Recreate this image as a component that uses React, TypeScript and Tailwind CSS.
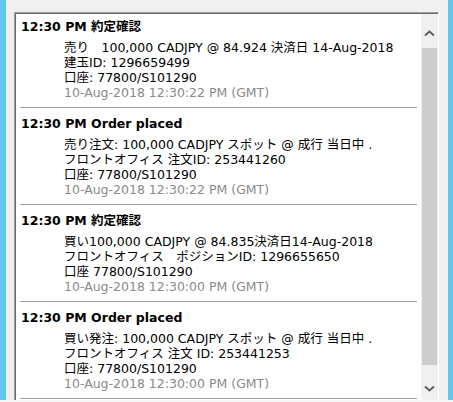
type Entry = {
  title: string;
  lines: string[];
  stamp: string;
};

const entries: Entry[] = [
  {
    title: '12:30 PM 約定確認',
    lines: ['売り　100,000 CADJPY @ 84.924 決済日 14-Aug-2018', '建玉ID: 1296659499', '口座: 77800/S101290'],
    stamp: '10-Aug-2018 12:30:22 PM (GMT)',
  },
  {
    title: '12:30 PM Order placed',
    lines: ['売り注文: 100,000 CADJPY スポット @ 成行 当日中 .', 'フロントオフィス 注文ID: 253441260', '口座: 77800/S101290'],
    stamp: '10-Aug-2018 12:30:22 PM (GMT)',
  },
  {
    title: '12:30 PM 約定確認',
    lines: ['買い100,000 CADJPY @ 84.835決済日14-Aug-2018', 'フロントオフィス　ポジションID: 1296655650', '口座 77800/S101290'],
    stamp: '10-Aug-2018 12:30:00 PM (GMT)',
  },
  {
    title: '12:30 PM Order placed',
    lines: ['買い発注: 100,000 CADJPY スポット @ 成行 当日中 .', 'フロントオフィス 注文 ID: 253441253', '口座: 77800/S101290'],
    stamp: '10-Aug-2018 12:30:00 PM (GMT)',
  },
];

function Chevron({ down }: { down?: boolean }) {
  return (
    <svg width="11" height="7" viewBox="0 0 11 7" className="block">
      <path
        d={down ? 'M1 1.5 L5.5 5.5 L10 1.5' : 'M1 5.5 L5.5 1.5 L10 5.5'}
        fill="none"
        stroke="#606060"
        strokeWidth="2"
      />
    </svg>
  );
}

function EntryRow({ entry, first }: { entry: Entry; first?: boolean }) {
  return (
    <div className={`${first ? 'pt-[5px]' : 'pt-[8px]'} ml-[4px] mr-[2px] border-b border-[#a0a0a0] pb-[7px]`}>
      <div className="pl-[1px] text-[12.5px] font-bold leading-[15px] text-black">{entry.title}</div>
      <div className="mt-[6px] pl-[44px]">
        {entry.lines.map((l, i) => (
          <div key={i} className="whitespace-pre text-[12.5px] leading-[15px] text-black">
            {l}
          </div>
        ))}
        <div className="whitespace-pre text-[12.5px] leading-[15px] text-[#8a8a8a]">{entry.stamp}</div>
      </div>
    </div>
  );
}

export default function App() {
  return (
    <div
      className="flex h-[402px] w-[453px] flex-col overflow-hidden bg-[#f0f0f0]"
      style={{ fontFamily: '"DejaVu Sans", "Noto Sans CJK JP", sans-serif' }}
    >
      <div className="flex h-[400px]">
        {/* left accent strip */}
        <div className="w-[6px] bg-[#60c8ea]" />
        <div className="flex flex-1 flex-col pl-[8px] pr-[9px] pt-[12px]">
          {/* list panel with inset border */}
          <div className="flex flex-1 overflow-hidden border-l border-t border-r border-[#a0a0a0] border-r-white">
            <div className="flex flex-1 overflow-hidden border-l border-t border-[#696969]">
              <div className="flex-1 overflow-hidden bg-white pr-[2px]">
                {entries.map((e, i) => (
                  <EntryRow key={i} entry={e} first={i === 0} />
                ))}
              </div>
              {/* scrollbar */}
              <div className="flex w-[17px] flex-col items-center bg-[#f0f0f0] pt-[16px]">
                <Chevron />
                <div className="mt-[11px] h-[317px] w-[15px] bg-[#cdcdcd]" />
                <div className="mt-[20px]">
                  <Chevron down />
                </div>
              </div>
            </div>
          </div>
        </div>
        {/* right accent strip */}
        <div className="w-[5px] bg-[#60c8ea]" />
      </div>
      <div className="h-[2px] bg-[#f7f7f7]" />
    </div>
  );
}
